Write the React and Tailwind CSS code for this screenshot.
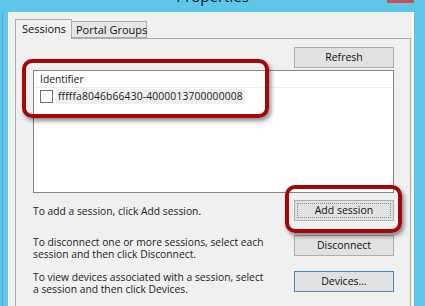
import React from 'react'

function WinButton({ children, focused = false, isDefault = false }) {
  return (
    <button
      type="button"
      className={`relative w-[100px] h-[21px] shrink-0 border bg-[#e1e1e1] text-[10.5px] leading-none text-[#111] ${
        isDefault ? 'border-[#3c8ad0]' : 'border-[#adadad]'
      }`}
    >
      {focused && <span className="absolute inset-[2px] border border-dotted border-[#8a8a8a]" />}
      {children}
    </button>
  )
}

function HelpRow({ lines, button, className = '', textClass = '', ...btn }) {
  return (
    <div className={`flex items-start justify-between gap-[8px] ${className}`}>
      <p className={`shrink-0 leading-[12px] text-[#1b1b1b] ${textClass}`}>
        {lines.map((l) => (
          <span key={l} className="block whitespace-nowrap">
            {l}
          </span>
        ))}
      </p>
      <WinButton {...btn}>{button}</WinButton>
    </div>
  )
}

export default function App() {
  return (
    <div className="relative w-[425px] h-[306px] overflow-hidden bg-[#5ec6e9] text-[10.3px] font-['Open_Sans',sans-serif]">
      {/* title bar */}
      <div className="flex h-[12px] items-start">
        <div className="w-[38px]" />
        <div className="flex-1 flex justify-center overflow-hidden h-[12px]">
          <span className="mt-[-12px] text-[15px] leading-[17px] text-[#0e1a33]">Properties</span>
        </div>
        <div className="w-[27px] h-[3px] mr-[11px] bg-[#c75252]" />
      </div>

      <div className="flex h-[294px]">
        <div className="w-[8px] flex">
          <div className="ml-[2px] w-px bg-[#3f8fb0]/50" />
        </div>
        <div className="w-[406px] bg-[#f0f0f0] border-l border-white border-r-2 pl-[6px] pt-[7px] pr-[1px] flex flex-col">
          {/* tabs */}
          <div className="flex items-end h-[20px] relative z-10">
            <div className="w-[57px] h-[20px] -mb-px bg-[#f0f0f0] border border-b-0 border-[#acacac] pl-[6px] pt-[1px] text-[11px] text-[#111] whitespace-nowrap">
              Sessions
            </div>
            <div className="w-[75px] h-[17px] bg-[#e6e6e6] border border-l-0 border-[#acacac] pl-[4px] text-[11px] text-[#111] whitespace-nowrap">
              Portal Groups
            </div>
          </div>

          {/* tab page */}
          <div className="flex-1 border border-[#acacac] pl-[17px] pr-[16px] pt-[8px] flex flex-col">
            <div className="flex justify-end">
              <WinButton>Refresh</WinButton>
            </div>

            <div className="mt-[2px] h-[123px] border border-[#828790] bg-white">
              <div className="h-[17px] border-b border-[#ececec] pl-[6px] pt-[1px] text-[#1b1b1b]">Identifier</div>
              <div className="flex items-center h-[16px] pl-[6px]">
                <span className="w-[13px] h-[13px] border border-[#707070] bg-white" />
                <span className="ml-[3px] px-[2px] bg-[#efefef] text-[#1b1b1b] leading-[15px] tracking-[0.15px]">
                  fffffa8046b66430-4000013700000008
                </span>
              </div>
            </div>

            <HelpRow
              className="mt-[7px]"
              textClass="pt-[5px]"
              lines={['To add a session, click Add session.']}
              button="Add session"
              focused
            />
            <HelpRow
              className="mt-[14px]"
              textClass="pt-[1px]"
              lines={['To disconnect one or more sessions, select each', 'session and then click Disconnect.']}
              button="Disconnect"
            />
            <HelpRow
              className="mt-[11px]"
              lines={['To view devices associated with a session, select', 'a session and then click Devices.']}
              button="Devices..."
              isDefault
            />
            <p className="mt-[17px] whitespace-nowrap leading-[12px] text-[#1b1b1b]">
              To log off a session, select it and click Log off.
            </p>
          </div>
        </div>
      </div>

      {/* red call-outs */}
      <div className="absolute left-[22px] top-[59px] w-[247px] h-[59px] rounded-[10px] border-[4px] border-[#a30808] shadow-[2px_3px_4px_rgba(0,0,0,0.45)]" />
      <div className="absolute left-[285px] top-[185px] w-[117px] h-[48px] rounded-[10px] border-[4px] border-[#a30808] shadow-[2px_3px_4px_rgba(0,0,0,0.45)]" />
    </div>
  )
}
